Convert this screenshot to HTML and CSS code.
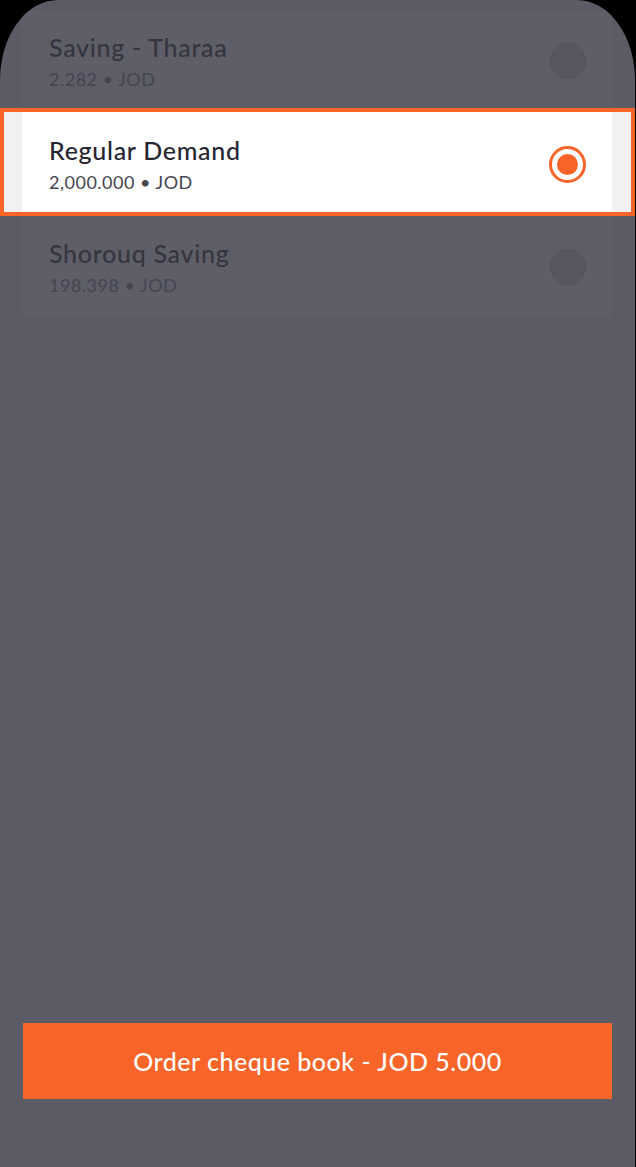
FILE: index.html
```html
<!DOCTYPE html>
<html lang="en">
<head>
<meta charset="utf-8">
<title>Select account</title>
<link rel="stylesheet" href="styles.css">
</head>
<body>
<div class="phone">
  <main class="content">
    <ul class="card">
      <li class="row">
        <div class="info">
          <div class="title">Saving - Tharaa</div>
          <div class="sub">2.282 • JOD</div>
        </div>
        <span class="radio"></span>
      </li>
      <li class="row selected">
        <div class="row-inner">
          <div class="info">
            <div class="title">Regular Demand</div>
            <div class="sub">2,000.000 • JOD</div>
          </div>
          <span class="radio on"><span class="dot"></span></span>
        </div>
      </li>
      <li class="row">
        <div class="info">
          <div class="title">Shorouq Saving</div>
          <div class="sub">198.398 • JOD</div>
        </div>
        <span class="radio"></span>
      </li>
    </ul>
  </main>
  <footer class="footer">
    <button class="order">Order cheque book - JOD 5.000</button>
  </footer>
</div>
</body>
</html>
```
FILE: styles.css
```css
* { box-sizing: border-box; }
html, body { margin: 0; padding: 0; }
body {
  background: #000;
  font-family: Lato, "Open Sans", sans-serif;
  width: 636px;
  height: 1167px;
  overflow: hidden;
}
.phone {
  width: 635px;
  height: 1167px;
  background: #5b5b65;
  border-radius: 58px 58px 0 0 / 80px 80px 0 0;
  overflow: hidden;
  display: flex;
  flex-direction: column;
}
.content {
  flex: 1;
  padding-top: 10px;
}
.card {
  list-style: none;
  margin: 0 23px 0 22px;
  padding: 0;
  background: #5e5e68;
}
.row {
  height: 102px;
  display: flex;
  align-items: center;
  justify-content: space-between;
  padding: 0 26px 0 27px;
}
.info { display: flex; flex-direction: column; gap: 6px; }
.title {
  font-size: 25px;
  line-height: 30px;
  font-weight: 500;
  color: #35353f;
  letter-spacing: 0.7px;
}
.sub {
  font-size: 18px;
  line-height: 22px;
  color: #45454f;
  letter-spacing: 0.5px;
}
.radio {
  width: 36px;
  height: 36px;
  border-radius: 50%;
  background: #575761;
  border: 1px solid #54545e;
  display: flex;
  align-items: center;
  justify-content: center;
}
.row.selected {
  height: 108px;
  margin: -4px -23px 0 -22px;
  padding: 0 19px 0 18px;
  border: 4px solid #f96529;
  background: #f1f1f2;
  display: block;
}
.row-inner {
  height: 100%;
  background: #fff;
  display: flex;
  align-items: center;
  justify-content: space-between;
  padding: 4px 26px 0 27px;
}
.selected .title { color: #262631; }
.selected .sub { color: #45454f; }
.radio.on {
  width: 37px;
  height: 37px;
  background: #fff;
  border: 3px solid #f96529;
}
.radio.on .dot {
  width: 21px;
  height: 21px;
  border-radius: 50%;
  background: #f96529;
}
.footer {
  height: 172px;
  padding: 28px 23px 0 23px;
  background: #5b5b65;
}
.order {
  display: block;
  width: 589px;
  height: 76px;
  border: 0;
  margin: 0;
  background: #f96428;
  color: #fff;
  font-family: Lato, "Open Sans", sans-serif;
  font-size: 25px;
  font-weight: 500;
  letter-spacing: 0.5px;
  cursor: pointer;
}
```
